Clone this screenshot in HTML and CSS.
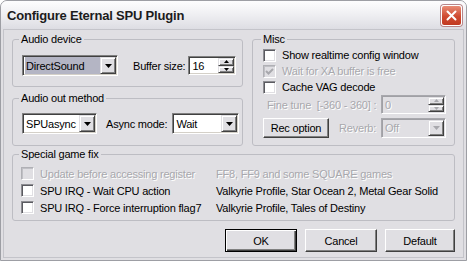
FILE: index.html
```html
<!DOCTYPE html>
<html lang="en">
<head>
    <meta charset="UTF-8">
    <meta name="viewport" content="width=device-width, initial-scale=1.0">
    <title>Configure Eternal SPU Plugin</title>
    <link rel="stylesheet" href="styles.css">
</head>
<body>

<div class="window">
    <div class="titlebar">
        <span class="title">Configure Eternal SPU Plugin</span>
        <span class="close-btn">
            <svg width="13" height="13" viewBox="0 0 13 13"><path d="M2.5 2.5 L10.5 10.5 M10.5 2.5 L2.5 10.5" stroke="#fff" stroke-width="2" stroke-linecap="round"/></svg>
        </span>
    </div>

    <div class="client">
        <div class="top">
            <div class="left-col">
                <fieldset class="group device">
                    <legend>Audio device</legend>
                    <div class="row">
                        <div class="combo w-device">
                            <span class="combo-text"><span class="sel">DirectSound</span></span>
                            <span class="drop"><svg width="7" height="4" viewBox="0 0 7 4"><polygon points="0,0 7,0 3.5,4" fill="#000"/></svg></span>
                        </div>
                        <span class="lbl buffer-lbl">Buffer size:</span>
                        <div class="spin-edit w-buffer">
                            <span class="edit-text">16</span>
                            <span class="spin">
                                <span class="spin-btn"><svg width="5" height="3" viewBox="0 0 5 3"><polygon points="2.5,0 5,3 0,3" fill="#000"/></svg></span>
                                <span class="spin-btn"><svg width="5" height="3" viewBox="0 0 5 3"><polygon points="0,0 5,0 2.5,3" fill="#000"/></svg></span>
                            </span>
                        </div>
                    </div>
                </fieldset>

                <fieldset class="group out">
                    <legend>Audio out method</legend>
                    <div class="row">
                        <div class="combo w-method">
                            <span class="combo-text">SPUasync</span>
                            <span class="drop"><svg width="7" height="4" viewBox="0 0 7 4"><polygon points="0,0 7,0 3.5,4" fill="#000"/></svg></span>
                        </div>
                        <span class="lbl async-lbl">Async mode:</span>
                        <div class="combo w-async">
                            <span class="combo-text">Wait</span>
                            <span class="drop"><svg width="7" height="4" viewBox="0 0 7 4"><polygon points="0,0 7,0 3.5,4" fill="#000"/></svg></span>
                        </div>
                    </div>
                </fieldset>
            </div>

            <fieldset class="group misc">
                <legend>Misc</legend>
                <div class="check-row">
                    <span class="check"></span>
                    <span>Show realtime config window</span>
                </div>
                <div class="check-row disabled">
                    <span class="check checked">
                        <svg width="9" height="9" viewBox="0 0 9 9"><polyline points="1,4 3.5,6.5 8,2" fill="none" stroke="#a8a8ad" stroke-width="2"/></svg>
                    </span>
                    <span>Wait for XA buffer is free</span>
                </div>
                <div class="check-row">
                    <span class="check"></span>
                    <span>Cache VAG decode</span>
                </div>
                <div class="row tune-row">
                    <span class="lbl tune-lbl disabled">Fine tune &nbsp;[-360 - 360] :</span>
                    <div class="spin-edit w-tune disabled">
                        <span class="edit-text">0</span>
                        <span class="spin">
                            <span class="spin-btn"><svg width="5" height="3" viewBox="0 0 5 3"><polygon points="2.5,0 5,3 0,3" fill="#a8a8ad"/></svg></span>
                            <span class="spin-btn"><svg width="5" height="3" viewBox="0 0 5 3"><polygon points="0,0 5,0 2.5,3" fill="#a8a8ad"/></svg></span>
                        </span>
                    </div>
                </div>
                <div class="row rec-row">
                    <button class="btn rec-btn">Rec option</button>
                    <span class="lbl reverb-lbl disabled">Reverb:</span>
                    <div class="combo w-reverb disabled">
                        <span class="combo-text">Off</span>
                        <span class="drop"><svg width="7" height="4" viewBox="0 0 7 4"><polygon points="0,0 7,0 3.5,4" fill="#a8a8ad"/></svg></span>
                    </div>
                </div>
            </fieldset>
        </div>

        <fieldset class="group special">
            <legend>Special game fix</legend>
            <div class="fix-grid">
                <div class="check-row disabled">
                    <span class="check"></span>
                    <span>Update before accessing register</span>
                </div>
                <span class="disabled">FF8, FF9 and some SQUARE games</span>

                <div class="check-row">
                    <span class="check"></span>
                    <span>SPU IRQ - Wait CPU action</span>
                </div>
                <span>Valkyrie Profile, Star Ocean 2, Metal Gear Solid</span>

                <div class="check-row">
                    <span class="check"></span>
                    <span>SPU IRQ - Force interruption flag7</span>
                </div>
                <span>Valkyrie Profile, Tales of Destiny</span>
            </div>
        </fieldset>

        <div class="buttons">
            <button class="btn default-btn w-ok">OK</button>
            <button class="btn w-cancel">Cancel</button>
            <button class="btn w-default">Default</button>
        </div>
    </div>
</div>

</body>
</html>
```

FILE: styles.css
```css
body {
    margin: 0;
    font-family: "Liberation Sans", Arial, sans-serif;
    font-size: 11px;
    letter-spacing: -0.2px;
    color: #000;
}
.window {
    width: 467px;
    height: 261px;
    box-sizing: border-box;
    background-color: #e0dfe3;
    border: 1px solid #9d9ea4;
    border-radius: 7px 7px 0 0;
    display: flex;
    flex-direction: column;
    overflow: hidden;
}
.titlebar {
    height: 28px;
    flex: none;
    display: flex;
    align-items: center;
    justify-content: space-between;
    padding: 0 4px 0 6px;
    background: linear-gradient(#fdfdfe, #f0f0f3 45%, #dddde3);
}
.title {
    font-size: 13px;
    font-weight: bold;
    color: #1c1c1c;
}
.close-btn {
    width: 21px;
    height: 21px;
    box-sizing: border-box;
    border: 1px solid #fff;
    border-radius: 3px;
    background: linear-gradient(#e98d76, #cf4a30 55%, #c13a22);
    box-shadow: 0 0 0 1px #b7868a;
    display: flex;
    align-items: center;
    justify-content: center;
}
.client {
    flex: 1;
    margin: 0 2px 2px;
    border: 1px solid #c4c4ca;
    padding: 3px 8px 0;
}
.top {
    display: flex;
    gap: 9px;
    height: 113px;
}
.left-col {
    width: 231px;
    display: flex;
    flex-direction: column;
    gap: 5px;
}
.group {
    margin: 0;
    min-width: 0;
    box-sizing: border-box;
    border: 1px solid #bdbdc3;
    border-radius: 3px;
    padding: 0 0 0 8px;
}
.group legend {
    padding: 0 2px;
    margin-left: -2px;
    line-height: 13px;
}
.device {
    height: 54px;
    padding-top: 9px;
}
.out {
    height: 54px;
    padding-top: 8px;
}
.misc {
    width: 203px;
    height: 113px;
    padding-left: 10px;
    padding-top: 1px;
}
.special {
    margin-top: 2px;
    height: 73px;
    padding-top: 4px;
}
.row {
    display: flex;
    align-items: center;
}
.lbl {
    white-space: nowrap;
}
.disabled {
    color: #a8a8ad;
    text-shadow: 1px 1px 0 #fff;
}

/* combo boxes and edits */
.combo, .spin-edit {
    display: flex;
    box-sizing: border-box;
    background-color: #fff;
    border: 1px solid;
    border-color: #808080 #fff #fff #808080;
    box-shadow: inset 1px 1px #404040, inset -1px -1px #d4d0c8;
    padding: 1px;
}
.combo {
    height: 21px;
}
.spin-edit {
    height: 19px;
}
.combo.disabled, .spin-edit.disabled {
    background-color: #e0dfe3;
    border-color: #a8a8ad #fff #fff #a8a8ad;
    box-shadow: inset 1px 1px #a0a0a5, inset -1px -1px #e0dfe3;
}
.combo-text, .edit-text {
    flex: 1;
    display: flex;
    align-items: center;
    padding-left: 2px;
    white-space: nowrap;
}
.combo-text .sel {
    background-color: #b4b5c4;
    align-self: stretch;
    display: flex;
    align-items: center;
    flex: 1;
    margin: 0 0 0 -1px;
    padding-left: 1px;
}
.drop, .spin-btn {
    display: flex;
    align-items: center;
    justify-content: center;
    box-sizing: border-box;
    background-color: #e0dfe3;
    border: 1px solid;
    border-color: #e0dfe3 #404040 #404040 #e0dfe3;
    box-shadow: inset 1px 1px #fff, inset -1px -1px #808080;
}
.drop {
    width: 16px;
}
.spin {
    width: 16px;
    display: flex;
    flex-direction: column;
}
.spin-btn {
    flex: 1;
}
.w-device {
    width: 96px;
    margin-left: 1px;
}
.buffer-lbl {
    margin-left: 15px;
}
.w-buffer {
    width: 48px;
    margin-left: 3px;
}
.w-method {
    width: 75px;
    margin-left: 1px;
}
.async-lbl {
    margin-left: 9px;
}
.w-async {
    width: 67px;
    margin-left: 5px;
}

/* checkboxes */
.check-row {
    display: flex;
    align-items: center;
    height: 16px;
    white-space: nowrap;
}
.check {
    width: 13px;
    height: 13px;
    flex: none;
    box-sizing: border-box;
    background-color: #fff;
    border: 1px solid;
    border-color: #8d8d92 #fff #fff #8d8d92;
    box-shadow: inset 1px 1px #5a5a60, inset -1px -1px #e0dfe3;
    margin-right: 6px;
    display: flex;
    align-items: center;
    justify-content: center;
}
.disabled .check {
    background-color: #e0dfe3;
    border-color: #b0b0b5 #fff #fff #b0b0b5;
    box-shadow: inset 1px 1px #c0c0c5;
}
.tune-row {
    height: 19px;
}
.tune-lbl {
    width: 114px;
    margin-left: 4px;
    white-space: pre;
}
.w-tune {
    width: 65px;
}
.rec-row {
    margin-top: 4px;
}
.reverb-lbl {
    width: 42px;
    margin-left: 10px;
}
.w-reverb {
    width: 65px;
    height: 20px;
}

/* special game fix */
.fix-grid {
    display: grid;
    grid-template-columns: 195px auto;
    grid-auto-rows: 17px;
    align-items: center;
    white-space: nowrap;
}

/* buttons */
.btn {
    font-family: inherit;
    font-size: 11px;
    letter-spacing: -0.2px;
    color: #000;
    background-color: #e0dfe3;
    box-sizing: border-box;
    border: 1px solid;
    border-color: #fff #404040 #404040 #fff;
    box-shadow: inset -1px -1px #808080;
    padding: 0;
}
.rec-btn {
    width: 66px;
    height: 20px;
}
.buttons {
    display: flex;
    justify-content: flex-end;
    gap: 8px;
    margin-top: 8px;
}
.buttons .btn {
    height: 23px;
}
.default-btn {
    border-color: #000;
    box-shadow: inset 1px 1px #fff, inset -1px -1px #404040, inset -2px -2px #808080;
}
.w-ok, .w-cancel {
    width: 72px;
}
.w-default {
    width: 70px;
}
```
